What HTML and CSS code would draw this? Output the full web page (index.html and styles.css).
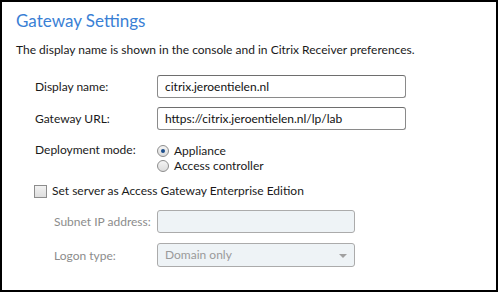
FILE: index.html
```html
<!doctype html>
<html lang="en">

<head>
    <meta charset="UTF-8" />
    <title>Gateway Settings</title>
    <link rel="stylesheet" href="styles.css">
</head>

<body>
    <div class="panel">
        <h1 class="heading">Gateway Settings</h1>
        <p class="intro">The display name is shown in the console and in Citrix Receiver preferences.</p>
        <div class="form">
            <label class="form__label">Display name:</label>
            <div class="field">citrix.jeroentielen.nl</div>

            <label class="form__label">Gateway URL:</label>
            <div class="field">https://citrix.jeroentielen.nl/lp/lab</div>

            <label class="form__label form__label--top">Deployment mode:</label>
            <div class="options">
                <div class="option"><span class="radio radio--checked"></span>Appliance</div>
                <div class="option"><span class="radio"></span>Access controller</div>
            </div>
        </div>
        <div class="check">
            <span class="checkbox"></span>Set server as Access Gateway Enterprise Edition
        </div>
        <div class="form form--sub">
            <label class="form__label form__label--disabled">Subnet IP address:</label>
            <div class="field field--disabled field--short"></div>

            <label class="form__label form__label--disabled">Logon type:</label>
            <div class="field field--disabled field--short field--select">Domain only<span class="caret"></span></div>
        </div>
    </div>
</body>

</html>
```

FILE: styles.css
```css
* {
    margin: 0;
    padding: 0;
    box-sizing: border-box;
}

html,
body {
    height: 100%;
    background: white;
}

body {
    font-family: 'Lato', 'Open Sans', sans-serif;
    font-size: 12px;
    color: #1a1a1a;
}

.panel {
    height: 292px;
    border: 2px solid #000;
    padding: 8px 14px 0;
}

.heading {
    font-weight: normal;
    font-size: 17px;
    color: #3a7fd5;
    line-height: 22px;
}

.intro {
    margin-top: 10px;
    line-height: 16px;
}

.form {
    display: grid;
    grid-template-columns: 122px 249px;
    row-gap: 9px;
    align-items: center;
    margin: 17px 0 0 19px;
}

.form__label {
    white-space: nowrap;
}

.form__label--top {
    align-self: start;
    margin-top: 3px;
}

.form__label--disabled {
    color: #8c8c8c;
}

.field {
    height: 23px;
    line-height: 21px;
    border: 1px solid #8a8a8a;
    border-top-color: #6e6e6e;
    border-radius: 3px;
    padding: 0 7px;
    background: white;
    color: #111;
    white-space: nowrap;
}

.field--disabled {
    background: #eef3f6;
    border-color: #ababab;
    color: #9a9a9a;
}

.field--short {
    width: 198px;
}

.field--select {
    position: relative;
    height: 24px;
    line-height: 22px;
}

.caret {
    position: absolute;
    right: 7px;
    top: 10px;
    border: 4px solid transparent;
    border-top: 4px solid #a0a0a0;
    border-bottom: 0;
}

.options {
    display: flex;
    flex-direction: column;
    line-height: 15px;
    margin-top: 4px;
}

.option {
    display: flex;
    align-items: center;
    gap: 5px;
}

.radio {
    width: 12px;
    height: 12px;
    border-radius: 50%;
    border: 1px solid #8d8d8d;
    background: linear-gradient(#f4f4f4, #dcdcdc);
    display: inline-flex;
    align-items: center;
    justify-content: center;
}

.radio--checked::after {
    content: '';
    width: 4px;
    height: 4px;
    border-radius: 50%;
    background: #1d4f8c;
}

.check {
    display: flex;
    align-items: center;
    gap: 5px;
    margin: 10px 0 0 18px;
    line-height: 16px;
}

.checkbox {
    width: 13px;
    height: 13px;
    border: 1px solid #8d8d8d;
    background: linear-gradient(#f2f2f2, #dedede);
}

.form--sub {
    grid-template-columns: 103px 198px;
    row-gap: 10px;
    margin: 11px 0 0 38px;
}
```
